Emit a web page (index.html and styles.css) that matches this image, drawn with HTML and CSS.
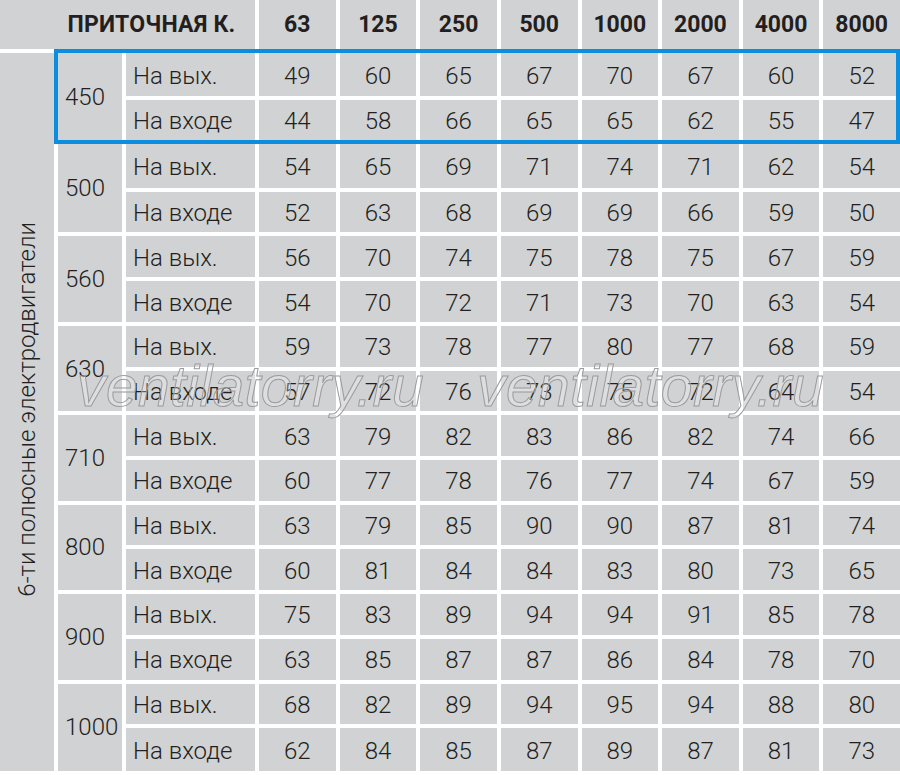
FILE: index.html
```html
<!DOCTYPE html>
<html lang="ru">
<head>
<meta charset="utf-8">
<title>Приточная камера</title>
<link rel="stylesheet" href="styles.css">
</head>
<body>
<div class="table">
  <div class="cell hd-title">ПРИТОЧНАЯ К.</div>
  <div class="cell hd">63</div>
  <div class="cell hd">125</div>
  <div class="cell hd">250</div>
  <div class="cell hd">500</div>
  <div class="cell hd">1000</div>
  <div class="cell hd">2000</div>
  <div class="cell hd">4000</div>
  <div class="cell hd">8000</div>

  <div class="cell side"><span class="side-text">6-ти полюсные электродвигатели</span></div>

  <div class="cell size">450</div>
  <div class="cell lbl">На вых.</div>
  <div class="cell v">49</div><div class="cell v">60</div><div class="cell v">65</div><div class="cell v">67</div><div class="cell v">70</div><div class="cell v">67</div><div class="cell v">60</div><div class="cell v">52</div>
  <div class="cell lbl">На входе</div>
  <div class="cell v">44</div><div class="cell v">58</div><div class="cell v">66</div><div class="cell v">65</div><div class="cell v">65</div><div class="cell v">62</div><div class="cell v">55</div><div class="cell v">47</div>

  <div class="cell size">500</div>
  <div class="cell lbl">На вых.</div>
  <div class="cell v">54</div><div class="cell v">65</div><div class="cell v">69</div><div class="cell v">71</div><div class="cell v">74</div><div class="cell v">71</div><div class="cell v">62</div><div class="cell v">54</div>
  <div class="cell lbl">На входе</div>
  <div class="cell v">52</div><div class="cell v">63</div><div class="cell v">68</div><div class="cell v">69</div><div class="cell v">69</div><div class="cell v">66</div><div class="cell v">59</div><div class="cell v">50</div>

  <div class="cell size">560</div>
  <div class="cell lbl">На вых.</div>
  <div class="cell v">56</div><div class="cell v">70</div><div class="cell v">74</div><div class="cell v">75</div><div class="cell v">78</div><div class="cell v">75</div><div class="cell v">67</div><div class="cell v">59</div>
  <div class="cell lbl">На входе</div>
  <div class="cell v">54</div><div class="cell v">70</div><div class="cell v">72</div><div class="cell v">71</div><div class="cell v">73</div><div class="cell v">70</div><div class="cell v">63</div><div class="cell v">54</div>

  <div class="cell size">630</div>
  <div class="cell lbl">На вых.</div>
  <div class="cell v">59</div><div class="cell v">73</div><div class="cell v">78</div><div class="cell v">77</div><div class="cell v">80</div><div class="cell v">77</div><div class="cell v">68</div><div class="cell v">59</div>
  <div class="cell lbl">На входе</div>
  <div class="cell v">57</div><div class="cell v">72</div><div class="cell v">76</div><div class="cell v">73</div><div class="cell v">75</div><div class="cell v">72</div><div class="cell v">64</div><div class="cell v">54</div>

  <div class="cell size">710</div>
  <div class="cell lbl">На вых.</div>
  <div class="cell v">63</div><div class="cell v">79</div><div class="cell v">82</div><div class="cell v">83</div><div class="cell v">86</div><div class="cell v">82</div><div class="cell v">74</div><div class="cell v">66</div>
  <div class="cell lbl">На входе</div>
  <div class="cell v">60</div><div class="cell v">77</div><div class="cell v">78</div><div class="cell v">76</div><div class="cell v">77</div><div class="cell v">74</div><div class="cell v">67</div><div class="cell v">59</div>

  <div class="cell size">800</div>
  <div class="cell lbl">На вых.</div>
  <div class="cell v">63</div><div class="cell v">79</div><div class="cell v">85</div><div class="cell v">90</div><div class="cell v">90</div><div class="cell v">87</div><div class="cell v">81</div><div class="cell v">74</div>
  <div class="cell lbl">На входе</div>
  <div class="cell v">60</div><div class="cell v">81</div><div class="cell v">84</div><div class="cell v">84</div><div class="cell v">83</div><div class="cell v">80</div><div class="cell v">73</div><div class="cell v">65</div>

  <div class="cell size">900</div>
  <div class="cell lbl">На вых.</div>
  <div class="cell v">75</div><div class="cell v">83</div><div class="cell v">89</div><div class="cell v">94</div><div class="cell v">94</div><div class="cell v">91</div><div class="cell v">85</div><div class="cell v">78</div>
  <div class="cell lbl">На входе</div>
  <div class="cell v">63</div><div class="cell v">85</div><div class="cell v">87</div><div class="cell v">87</div><div class="cell v">86</div><div class="cell v">84</div><div class="cell v">78</div><div class="cell v">70</div>

  <div class="cell size">1000</div>
  <div class="cell lbl">На вых.</div>
  <div class="cell v">68</div><div class="cell v">82</div><div class="cell v">89</div><div class="cell v">94</div><div class="cell v">95</div><div class="cell v">94</div><div class="cell v">88</div><div class="cell v">80</div>
  <div class="cell lbl">На входе</div>
  <div class="cell v">62</div><div class="cell v">84</div><div class="cell v">85</div><div class="cell v">87</div><div class="cell v">89</div><div class="cell v">87</div><div class="cell v">81</div><div class="cell v">73</div>

  <div class="highlight"></div>
  <div class="watermark"><span class="wm wm-1">ventilatorry.ru</span><span class="wm wm-2">ventilatorry.ru</span></div>
</div>
</body>
</html>
```
FILE: styles.css
```css
html, body {
  margin: 0;
  padding: 0;
  background: #ffffff;
}
body {
  width: 900px;
  height: 775px;
  overflow: hidden;
  font-family: Roboto, "Liberation Sans", sans-serif;
  color: #231f20;
}
.table {
  position: relative;
  display: grid;
  grid-template-columns: 54px 64px 129px repeat(8, 1fr);
  grid-template-rows: 49px 43px 40px 44px 40px 41px 41px repeat(9, 40.7px) 43px;
  column-gap: 4px;
  row-gap: 4px;
  width: 900px;
}
.cell {
  background: #d1d2d4;
  display: flex;
  align-items: center;
}
.hd-title {
  grid-column: 1 / 4;
  justify-content: center;
  padding-left: 48px;
  font-weight: 700;
  font-size: 23px;
  letter-spacing: 0.2px;
}
.hd {
  justify-content: center;
  font-weight: 700;
  font-size: 23px;
}
.side {
  grid-column: 1;
  grid-row: 2 / span 16;
  justify-content: center;
}
.side-text {
  writing-mode: vertical-rl;
  transform: rotate(180deg);
  font-size: 24px;
  font-weight: 300;
  white-space: nowrap;
  margin-top: -6px;
}
.size {
  grid-row: span 2;
  padding-left: 7px;
  font-size: 24px;
  font-weight: 300;
}
.lbl {
  padding-left: 7px;
  font-size: 24px;
  font-weight: 300;
  padding-top: 2px;
}
.v {
  justify-content: center;
  font-size: 24px;
  font-weight: 300;
  padding-top: 2px;
}
.highlight {
  position: absolute;
  grid-column: 2 / -1;
  grid-row: 2 / 4;
  top: -4px;
  left: -4px;
  right: 0;
  bottom: -4px;
  border: 4px solid #0b8edf;
  pointer-events: none;
}
.watermark {
  position: absolute;
  left: 0;
  top: 358px;
  width: 900px;
  height: 64px;
  pointer-events: none;
}
.wm {
  position: absolute;
  top: 0;
  font-family: "Liberation Sans", Arial, sans-serif;
  font-style: italic;
  font-size: 57px;
  line-height: 57px;
  letter-spacing: 0.4px;
  color: rgba(255, 255, 255, 0.28);
  -webkit-text-stroke: 1px #9b9b9b;
  white-space: nowrap;
}
.wm-1 { left: 77px; }
.wm-2 { left: 477px; }
```
